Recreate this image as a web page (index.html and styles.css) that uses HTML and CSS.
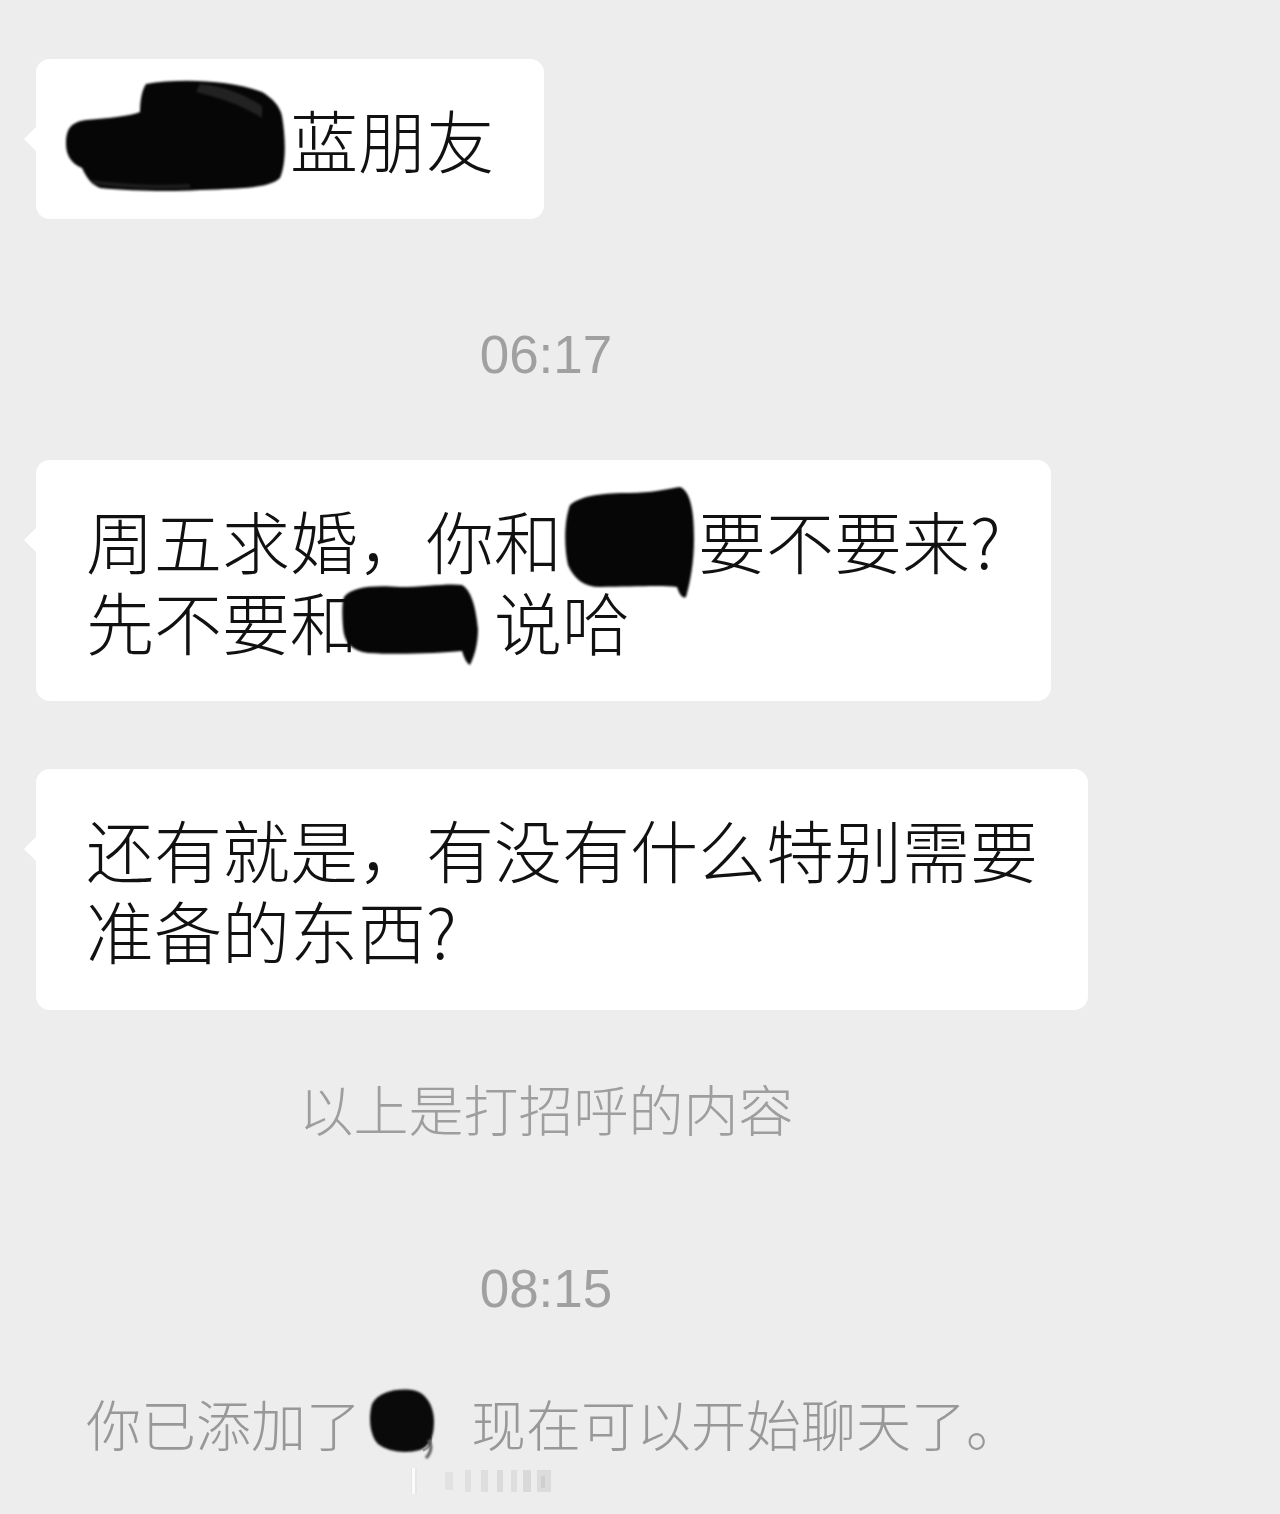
FILE: index.html
```html
<!DOCTYPE html>
<html lang="zh-CN">
<head>
<meta charset="utf-8">
<title>聊天</title>
<link rel="stylesheet" href="styles.css">
</head>
<body>
<main class="chat">
  <div class="row first">
    <div class="bubble">
      <span class="redact w3">
        <svg class="blob" viewBox="50 66 260 140" style="left:-36px;top:-32px;width:260px;height:140px">
          <path d="M146 84 C180 78 230 80 262 92 C272 98 280 106 282 116 C286 140 286 164 280 178 C270 188 240 189 200 190 C170 192 130 191 100 188 C90 184 86 176 82 168 C72 164 66 156 66 144 C66 130 70 122 86 120 C110 118 130 116 140 112 C140 100 142 90 146 84 Z" fill="#060606"/>
          <path d="M200 84 C225 86 248 96 262 106 L262 118 C240 104 220 98 196 92 Z" fill="#444" opacity="0.45"/>
          <path d="M92 182 C120 186 160 188 190 186" stroke="#333" stroke-width="4" fill="none" opacity="0.5"/>
        </svg>
      </span>蓝朋友
    </div>
  </div>

  <div class="time t1">06:17</div>

  <div class="row">
    <div class="bubble">
      周五求婚，你和<span class="redact w2">
        <svg class="blob" viewBox="556 484 144 120" style="left:-6px;top:-16px;width:144px;height:120px">
          <path d="M570 506 C582 496 604 494 630 494 C650 494 668 490 680 488 C690 492 694 510 694 540 C694 564 690 584 686 598 C682 600 679 594 677 588 C660 586 630 588 600 588 C584 588 574 580 568 566 C564 548 564 522 570 506 Z" fill="#060606"/>
        </svg>
      </span>要不要来?<br>先不要和<span class="redact w2">
        <svg class="blob" viewBox="336 578 150 94" style="left:-22px;top:-3px;width:150px;height:94px">
          <path d="M344 598 C352 588 372 586 400 588 C424 588 448 584 462 586 C472 592 476 610 478 630 C478 646 474 658 470 666 C466 664 464 658 462 652 C440 654 400 656 368 654 C352 652 344 644 343 628 C342 614 342 604 344 598 Z" fill="#060606"/>
        </svg>
      </span>说哈
    </div>
  </div>

  <div class="row third">
    <div class="bubble">还有就是，有没有什么特别需要<br>准备的东西?</div>
  </div>

  <div class="sys s1">以上是打招呼的内容</div>

  <div class="time t2">08:15</div>

  <div class="sys s2">你已添加了<span class="redact w1">
      <svg class="blob" viewBox="362 1390 80 74" style="left:1px;top:-8px;width:80px;height:74px">
        <path d="M372 1410 C378 1398 396 1394 412 1396 C426 1398 434 1412 434 1428 C434 1442 430 1452 420 1456 C406 1460 388 1458 378 1450 C370 1442 368 1424 372 1410 Z" fill="#0a0a0a"/>
        <path d="M428 1446 C432 1450 432 1458 426 1464" stroke="#555" stroke-width="3" fill="none"/>
      </svg>
    </span>，现在可以开始聊天了。</div>

  <div class="mark" aria-hidden="true">
    <svg viewBox="0 0 150 30" width="150" height="30">
      <rect x="2" y="2" width="6" height="26" fill="#e6e6e6"/>
      <rect x="3" y="2" width="3" height="26" fill="#fbfbfb"/>
      <rect x="36" y="6" width="8" height="18" fill="#e2e2e2"/>
      <rect x="56" y="4" width="6" height="22" fill="#e0e0e0"/>
      <rect x="72" y="4" width="7" height="22" fill="#dedede"/>
      <rect x="88" y="4" width="6" height="22" fill="#dbdbdb"/>
      <rect x="102" y="4" width="6" height="22" fill="#dedede"/>
      <rect x="114" y="4" width="8" height="22" fill="#d9d9d9"/>
      <rect x="128" y="4" width="14" height="22" fill="#dcdcdc"/>
      <rect x="132" y="10" width="4" height="12" fill="#cfcfcf"/>
    </svg>
  </div>
</main>
</body>
</html>
```

FILE: styles.css
```css
html, body {
  margin: 0;
  padding: 0;
  background: #ededed;
}

body {
  font-family: "Noto Sans CJK SC", "Noto Sans", sans-serif;
  font-weight: 300;
  color: #111111;
}

.chat {
  width: 1092px;
  padding-top: 59px;
  height: 1455px;
}

.row {
  display: flex;
  padding-left: 36px;
}

.row.third {
  margin-top: 68px;
}

.bubble {
  position: relative;
  background: #ffffff;
  border-radius: 14px;
  padding: 39px 50px 40px 50px;
  font-size: 68px;
  line-height: 81px;
  white-space: nowrap;
}

.bubble::before {
  content: "";
  position: absolute;
  left: -12px;
  top: 68px;
  width: 0;
  height: 0;
  border-top: 12px solid transparent;
  border-bottom: 12px solid transparent;
  border-right: 12px solid #ffffff;
}

.redact {
  position: relative;
  display: inline-block;
  vertical-align: top;
  height: 81px;
}

.redact.w3 { width: 3em; }
.redact.w2 { width: 2em; }
.redact.w1 { width: 1em; height: 60px; }

.blob {
  position: absolute;
  filter: blur(1.2px);
  overflow: visible;
}

.time {
  text-align: center;
  font-family: "Liberation Sans", Arial, sans-serif;
  font-weight: 400;
  font-size: 53px;
  line-height: 60px;
  color: #a0a0a0;
}

.time.t1 { margin-top: 106px; margin-bottom: 75px; }
.time.t2 { margin-top: 122px; }

.sys {
  font-size: 55px;
  line-height: 60px;
  color: #9e9e9e;
}

.sys.s1 {
  text-align: center;
  margin-top: 67px;
}

.sys.s2 {
  margin-top: 73px;
  padding-left: 86px;
  color: #989898;
  white-space: nowrap;
}

.mark {
  margin-top: 14px;
  padding-left: 409px;
  height: 30px;
  line-height: 0;
}
```
